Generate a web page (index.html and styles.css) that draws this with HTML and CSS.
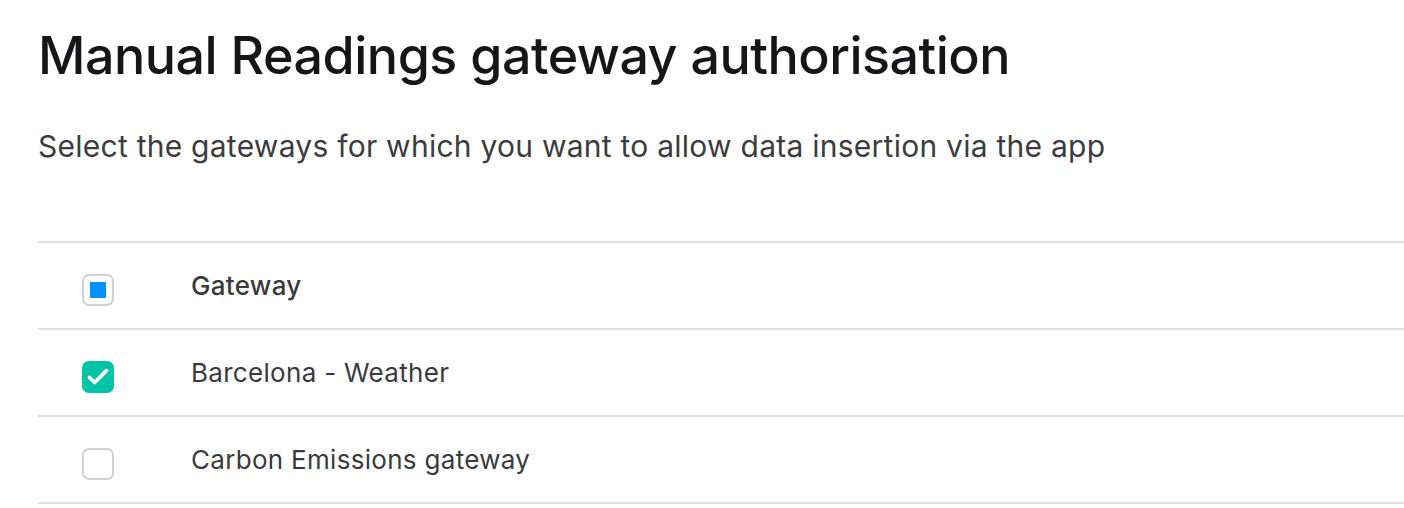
FILE: index.html
```html
<!DOCTYPE html>
<html>
	<head>
		<meta charset="utf-8">
		<title>Manual Readings gateway authorisation</title>
		<link rel="stylesheet" href="styles.css">
	</head>
	<body>
		<div class="page">
			<h1 class="title">Manual Readings gateway authorisation</h1>
			<p class="intro">Select the gateways for which you want to allow data insertion via the app</p>
			<div class="table">
				<div class="row head">
					<div class="cell check"><span class="box partial"><i></i></span></div>
					<div class="cell name">Gateway</div>
				</div>
				<div class="row">
					<div class="cell check">
						<span class="box checked">
							<svg width="28" height="28" viewBox="0 0 28 28"><path d="M5.5 14.5l5.2 5 11.8-11.8" fill="none" stroke="#fff" stroke-width="3.8" stroke-linecap="round" stroke-linejoin="round"/></svg>
						</span>
					</div>
					<div class="cell name">Barcelona - Weather</div>
				</div>
				<div class="row">
					<div class="cell check"><span class="box"></span></div>
					<div class="cell name">Carbon Emissions gateway</div>
				</div>
			</div>
		</div>
	</body>
</html>
```

FILE: styles.css
```css
*{
	margin:0;
	padding:0;
	box-sizing:border-box;
}
body{
	background:#fff;
	font-family:Inter,"Noto Sans",sans-serif;
	color:#1d1d1f;
}
.page{
	padding:24px 0 0 38px;
}
.title{
	font-size:52px;
	font-weight:500;
	line-height:64px;
	letter-spacing:-0.5px;
	color:#161618;
}
.intro{
	margin-top:40px;
	font-size:30px;
	line-height:36px;
	letter-spacing:0.25px;
	color:#3c3c40;
}
.table{
	margin-top:77px;
	border-top:2px solid #e0e0e0;
}
.row{
	display:flex;
	align-items:center;
	height:87px;
	border-bottom:2px solid #e0e0e0;
}
.check{
	width:153px;
	padding-left:44px;
	display:flex;
	align-items:center;
}
.name{
	font-size:26px;
	letter-spacing:0.3px;
	color:#3a3a3e;
}
.head .name{
	font-weight:500;
}
.box{
	width:32px;
	height:32px;
	margin-top:8px;
	border:2px solid #cfd0d4;
	border-radius:7px;
	display:flex;
	align-items:center;
	justify-content:center;
	background:#fff;
}
.box svg{
	flex:none;
}
.box.partial i{
	display:block;
	width:16px;
	height:16px;
	background:#0090ff;
	border-radius:1px;
}
.box.checked{
	background:#00c4a7;
	border-color:#00c4a7;
}
```
